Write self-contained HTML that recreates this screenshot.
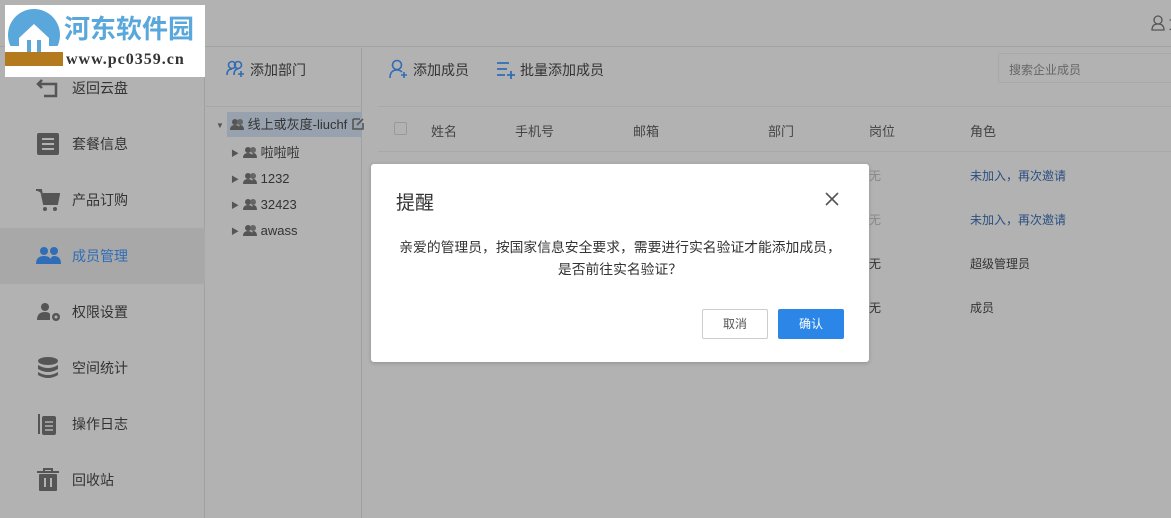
<!DOCTYPE html>
<html><head><meta charset="utf-8"><style>
*{margin:0;padding:0;box-sizing:border-box}
body{width:1171px;height:518px;overflow:hidden;background:#b2b2b2;font-family:"Liberation Sans","Noto Sans CJK SC",sans-serif;color:#333;position:relative;font-size:13px}
.a{position:absolute;white-space:nowrap}
.hdr{left:0;top:0;width:1171px;height:47px;border-bottom:1px solid #a2a2a2}
.side{left:0;top:48px;width:205px;height:470px;border-right:1px solid #a0a0a0}
.tree{left:206px;top:48px;width:156px;height:470px;border-right:1px solid #a0a0a0}
.nav{position:absolute;left:0;width:205px;height:56px;font-size:14px;color:#333}
.nav span{position:absolute;left:72px;top:18px}
.nav svg{position:absolute;left:36px;top:16px}
.tr{position:absolute;font-size:13px;color:#333;line-height:16px;white-space:nowrap}
.tr svg{vertical-align:-2px}
.th{position:absolute;top:121px;font-size:13px;color:#444}
.td{position:absolute;font-size:12px}
.dlg{left:371px;top:164px;width:498px;height:198px;background:#fff;border-radius:3px;box-shadow:0 1px 4px rgba(0,0,0,.2)}
</style></head><body>
<div class="a hdr"></div>
<div class="a" style="left:1151px;top:14px;font-size:14px;color:#444">
<svg width="14" height="16" viewBox="0 0 14 16" style="vertical-align:-2px"><circle cx="7" cy="5" r="4" fill="none" stroke="#555" stroke-width="1.3"/><path d="M1 15 Q1 9 7 9 Q13 9 13 15Z" fill="none" stroke="#555" stroke-width="1.3"/></svg> 文</div>
<div class="a side">
<div class="nav" style="top:12px"><svg width="24" height="24"><path d="M6 4 L2 8 L6 12 M2 8 H20 V20 H8" fill="none" stroke="#555" stroke-width="2.5"/></svg><span>返回云盘</span></div>
<div class="nav" style="top:68px"><svg width="24" height="24"><rect x="1" y="1" width="22" height="22" rx="2" fill="#555"/><path d="M6 7H18M6 12H18M6 17H18" stroke="#b2b2b2" stroke-width="2"/></svg><span>套餐信息</span></div>
<div class="nav" style="top:124px"><svg width="24" height="24"><path d="M0 2H5L8 16H21L23 6H7" fill="#555" stroke="#555" stroke-width="2"/><circle cx="9" cy="21" r="2" fill="#555"/><circle cx="19" cy="21" r="2" fill="#555"/></svg><span>产品订购</span></div>
<div class="nav" style="top:180px;background:#a8a8a8;color:#2f6db8"><svg width="26" height="24"><circle cx="8" cy="7" r="4" fill="#2f6db8"/><circle cx="18" cy="7" r="4" fill="#2f6db8"/><path d="M0 20Q0 12 8 12Q16 12 16 20ZM14 20Q14 12 18 12Q25 12 25 20Z" fill="#2f6db8"/></svg><span>成员管理</span></div>
<div class="nav" style="top:236px"><svg width="26" height="24"><circle cx="9" cy="7" r="4" fill="#555"/><path d="M1 20Q1 12 9 12Q13 12 14 14V20Z" fill="#555"/><circle cx="20" cy="17" r="4" fill="#555"/><circle cx="20" cy="17" r="1.5" fill="#b2b2b2"/></svg><span>权限设置</span></div>
<div class="nav" style="top:292px"><svg width="24" height="24"><ellipse cx="12" cy="5" rx="10" ry="4" fill="#555"/><path d="M2 9Q12 15 22 9V13Q12 19 2 13ZM2 16Q12 22 22 16V19Q12 25 2 19Z" fill="#555"/></svg><span>空间统计</span></div>
<div class="nav" style="top:348px"><svg width="24" height="24"><path d="M3 2V22" stroke="#555" stroke-width="2"/><rect x="6" y="4" width="14" height="19" rx="2" fill="#555"/><path d="M9 10H17M9 14H17M9 18H17" stroke="#b2b2b2" stroke-width="1.5"/></svg><span>操作日志</span></div>
<div class="nav" style="top:404px"><svg width="24" height="24"><path d="M1 4H23M8 4V1H16V4" stroke="#555" stroke-width="2" fill="none"/><rect x="3" y="6" width="18" height="17" rx="1" fill="#555"/><path d="M9 10V19M15 10V19" stroke="#b2b2b2" stroke-width="2"/></svg><span>回收站</span></div>
</div>
<div class="a tree">
<div class="tr" style="left:20px;top:12px;font-size:14px;color:#333"><svg width="20" height="18" style="vertical-align:-3px;margin-right:4px"><circle cx="6" cy="5" r="3.5" fill="none" stroke="#2f6db8" stroke-width="1.6"/><circle cx="12" cy="5" r="3.5" fill="none" stroke="#2f6db8" stroke-width="1.6"/><path d="M1 15Q1 9 6 9M8 15Q8 9 12 9" fill="none" stroke="#2f6db8" stroke-width="1.6"/><path d="M15 11V17M12 14H18" stroke="#2f6db8" stroke-width="1.6"/></svg>添加部门</div>
<div class="a" style="left:0;top:58px;width:156px;height:0;border-top:1px solid #a6a6a6"></div>
<div class="a" style="left:21px;top:64px;width:135px;height:25px;background:#97a2ae"></div>
<div class="tr" style="left:10px;top:70px;font-size:8px;color:#555">▼</div>
<div class="tr" style="left:24px;top:69px"><svg width="14" height="13"><circle cx="5" cy="4" r="3" fill="#555"/><circle cx="10" cy="4" r="3" fill="#666"/><path d="M0 12Q0 7 5 7Q10 7 10 12ZM9 12Q9 7 10 7Q14 7 14 12Z" fill="#555"/></svg> 线上或灰度-liuchf</div>
<svg class="a" style="left:146px;top:69px" width="12" height="13"><path d="M1 2H8M1 2V12H11V6" fill="none" stroke="#555" stroke-width="1.6"/><path d="M5 8L11 2" stroke="#555" stroke-width="1.6"/></svg>
<div class="tr" style="left:25px;top:98px;font-size:8px;color:#555">▶</div>
<div class="tr" style="left:37px;top:97px"><svg width="14" height="13"><circle cx="5" cy="4" r="3" fill="#555"/><circle cx="10" cy="4" r="3" fill="#666"/><path d="M0 12Q0 7 5 7Q10 7 10 12ZM9 12Q9 7 10 7Q14 7 14 12Z" fill="#555"/></svg> 啦啦啦</div>
<div class="tr" style="left:25px;top:124px;font-size:8px;color:#555">▶</div>
<div class="tr" style="left:37px;top:123px"><svg width="14" height="13"><circle cx="5" cy="4" r="3" fill="#555"/><circle cx="10" cy="4" r="3" fill="#666"/><path d="M0 12Q0 7 5 7Q10 7 10 12ZM9 12Q9 7 10 7Q14 7 14 12Z" fill="#555"/></svg> 1232</div>
<div class="tr" style="left:25px;top:150px;font-size:8px;color:#555">▶</div>
<div class="tr" style="left:37px;top:149px"><svg width="14" height="13"><circle cx="5" cy="4" r="3" fill="#555"/><circle cx="10" cy="4" r="3" fill="#666"/><path d="M0 12Q0 7 5 7Q10 7 10 12ZM9 12Q9 7 10 7Q14 7 14 12Z" fill="#555"/></svg> 32423</div>
<div class="tr" style="left:25px;top:176px;font-size:8px;color:#555">▶</div>
<div class="tr" style="left:37px;top:175px"><svg width="14" height="13"><circle cx="5" cy="4" r="3" fill="#555"/><circle cx="10" cy="4" r="3" fill="#666"/><path d="M0 12Q0 7 5 7Q10 7 10 12ZM9 12Q9 7 10 7Q14 7 14 12Z" fill="#555"/></svg> awass</div>
</div>
<!-- main -->
<div class="a" style="left:389px;top:59px;font-size:14px"><svg width="20" height="20" style="vertical-align:-4px;margin-right:4px"><circle cx="8" cy="6" r="4.5" fill="none" stroke="#2f6db8" stroke-width="1.6"/><path d="M1 19Q1 11 8 11Q11 11 13 13" fill="none" stroke="#2f6db8" stroke-width="1.6"/><path d="M15 13V19M12 16H18" stroke="#2f6db8" stroke-width="1.6"/></svg>添加成员</div>
<div class="a" style="left:496px;top:59px;font-size:14px"><svg width="20" height="20" style="vertical-align:-4px;margin-right:4px"><path d="M1 4H13M1 10H11M1 16H9M15 12V20M11 16H19" stroke="#2f6db8" stroke-width="1.8"/></svg>批量添加成员</div>
<div class="a" style="left:998px;top:53px;width:180px;height:30px;border:1px solid #a8a8a8;border-radius:2px;font-size:12px;color:#666;padding:7px 10px">搜索企业成员</div>
<div class="a" style="left:378px;top:106px;width:793px;border-top:1px solid #a8a8a8"></div>
<div class="a" style="left:378px;top:151px;width:793px;border-top:1px solid #a8a8a8"></div>
<div class="a" style="left:394px;top:122px;width:13px;height:13px;border:1px solid #999;border-radius:2px"></div>
<div class="th" style="left:431px">姓名</div>
<div class="th" style="left:515px">手机号</div>
<div class="th" style="left:633px">邮箱</div>
<div class="th" style="left:768px">部门</div>
<div class="th" style="left:869px">岗位</div>
<div class="th" style="left:970px">角色</div>
<div class="td" style="left:869px;top:167px;color:#888">无</div>
<div class="td" style="left:970px;top:167px;color:#2a4f80">未加入，再次邀请</div>
<div class="td" style="left:869px;top:211px;color:#888">无</div>
<div class="td" style="left:970px;top:211px;color:#2a4f80">未加入，再次邀请</div>
<div class="td" style="left:869px;top:255px;color:#333">无</div>
<div class="td" style="left:970px;top:255px;color:#333">超级管理员</div>
<div class="td" style="left:869px;top:299px;color:#333">无</div>
<div class="td" style="left:970px;top:299px;color:#333">成员</div>
<!-- dialog -->
<div class="a dlg">
<div class="a" style="left:25px;top:24px;font-size:19px;color:#333">提醒</div>
<svg class="a" style="left:454px;top:28px" width="14" height="14"><path d="M1 1L13 13M13 1L1 13" stroke="#555" stroke-width="1.6"/></svg>
<div class="a" style="left:0;top:73px;width:498px;text-align:center;font-size:13.8px;color:#333;line-height:22px">亲爱的管理员，按国家信息安全要求，需要进行实名验证才能添加成员，<br>是否前往实名验证？</div>
<div class="a" style="left:331px;top:145px;width:66px;height:30px;border:1px solid #ccc;border-radius:2px;text-align:center;line-height:28px;font-size:12px;color:#555">取消</div>
<div class="a" style="left:407px;top:145px;width:66px;height:30px;background:#2b86e8;border-radius:2px;text-align:center;line-height:30px;font-size:12px;color:#fff">确认</div>
</div>
<!-- logo -->
<div class="a" style="left:5px;top:5px;width:200px;height:72px;background:#fff"></div>
<svg class="a" style="left:5px;top:8px" width="58" height="66"><circle cx="29" cy="27" r="26" fill="#5aa7dc"/><path d="M4 38H58V66H4Z" fill="#fff"/><path d="M0 44H58V58H0Z" fill="#b37a1e"/><path d="M14 30L29 16L44 30V44H14Z" fill="#fff"/><path d="M22 32H26V44H22ZM32 32H36V44H32Z" fill="#5aa7dc"/></svg>
<div class="a" style="left:64px;top:11px;font-size:26px;font-weight:bold;color:#5aa7dc;letter-spacing:0;font-family:'Noto Sans CJK SC',sans-serif;line-height:34px">河东软件园</div>
<div class="a" style="left:66px;top:51px;font-size:16px;font-weight:bold;color:#333;font-family:'Liberation Serif',serif;letter-spacing:1px">www.pc0359.cn</div>
</body></html>
